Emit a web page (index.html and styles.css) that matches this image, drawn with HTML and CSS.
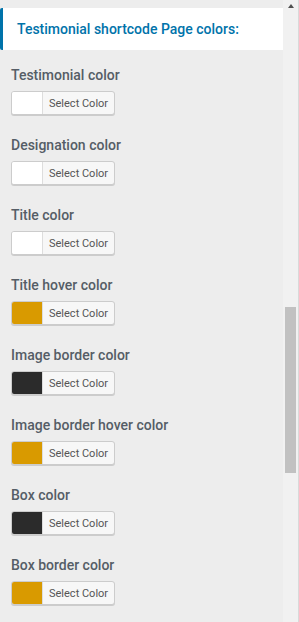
FILE: index.html
```html
<!DOCTYPE html>
<html lang="en">
<head>
    <meta charset="UTF-8">
    <meta name="viewport" content="width=device-width, initial-scale=1.0">
    <title>page colors</title>
    <link rel="stylesheet" href="styles.css">
</head>
<body>
    <div class="page">
        <section class="panel">
            <h3 class="section_title">Testimonial shortcode Page colors:</h3>

            <div class="field">
                <p class="label">Testimonial color</p>
                <button class="color_btn"><span class="swatch white"></span><span class="txt">Select Color</span></button>
            </div>
            <div class="field">
                <p class="label">Designation color</p>
                <button class="color_btn"><span class="swatch white"></span><span class="txt">Select Color</span></button>
            </div>
            <div class="field">
                <p class="label">Title color</p>
                <button class="color_btn"><span class="swatch white"></span><span class="txt">Select Color</span></button>
            </div>
            <div class="field">
                <p class="label">Title hover color</p>
                <button class="color_btn"><span class="swatch gold"></span><span class="txt">Select Color</span></button>
            </div>
            <div class="field">
                <p class="label">Image border color</p>
                <button class="color_btn"><span class="swatch dark"></span><span class="txt">Select Color</span></button>
            </div>
            <div class="field">
                <p class="label">Image border hover color</p>
                <button class="color_btn"><span class="swatch gold"></span><span class="txt">Select Color</span></button>
            </div>
            <div class="field">
                <p class="label">Box color</p>
                <button class="color_btn"><span class="swatch dark"></span><span class="txt">Select Color</span></button>
            </div>
            <div class="field">
                <p class="label">Box border color</p>
                <button class="color_btn"><span class="swatch gold"></span><span class="txt">Select Color</span></button>
            </div>
        </section>

        <div class="scrollbar">
            <span class="arrow"></span>
            <span class="thumb"></span>
        </div>
    </div>
</body>
</html>
```

FILE: styles.css
```css
html, body{ margin:0; padding:0; height:100%;}
body{ background:#ededed; font-family: Roboto, "Liberation Sans", sans-serif; overflow:hidden;}
p, h3{ margin:0;}
button{ font-family:inherit; padding:0; cursor:pointer;}

.page{ display:flex; height:622px;}
.panel{ flex:1; padding-top:8px;}
.scrollbar{
    width:15px; flex:none;
    background:#f1f1f1;
    border-right:1px solid #d9d9d9;
    display:flex; flex-direction:column; align-items:center;
}
.scrollbar>.arrow{
    margin-top:4px;
    width:0; height:0;
    border-left:3px solid transparent;
    border-right:3px solid transparent;
    border-bottom:4px solid #505050;
}
.scrollbar>.thumb{
    margin-top:299px;
    width:11px; height:166px;
    background:#c1c1c1;
}

.section_title{
    height:42px; box-sizing:border-box;
    background:#fff;
    border-left:3px solid #0073aa;
    border-radius:2px 0 0 2px;
    padding-left:14px;
    display:flex; align-items:center;
    font-size:14px; font-weight:500;
    color:#0073aa;
}

.field{ padding:15px 0 0 11px; }
.field + .field{ padding-top:20px; }
.label{
    font-size:14px; line-height:20px; font-weight:500;
    color:#555d66;
}
.color_btn{
    margin-top:6px;
    height:24px; box-sizing:border-box;
    display:flex; align-items:stretch;
    border:1px solid #ccc; border-radius:3px;
    background:#f7f7f7;
    box-shadow:0 1px 0 #ccc;
    overflow:hidden;
}
.swatch{ width:30px; border-right:1px solid #ddd;}
.swatch.white{ background:#fff;}
.swatch.gold{ background:#d99a00;}
.swatch.dark{ background:#2b2b2b;}
.color_btn>.txt{
    padding:0 6px;
    display:flex; align-items:center;
    font-size:11px; color:#555;
}
```
